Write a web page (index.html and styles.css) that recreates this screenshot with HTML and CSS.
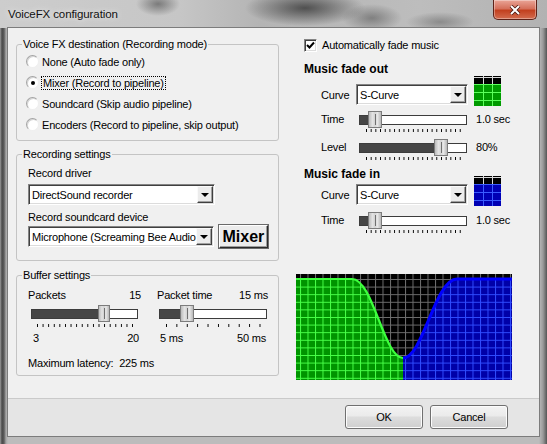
FILE: index.html
```html
<!DOCTYPE html>
<html lang="en">
<head>
    <meta charset="UTF-8">
    <title>VoiceFX configuration</title>
    <link rel="stylesheet" href="styles.css">
</head>
<body>
    <div class="window">
        <div class="titlebar">
            <span class="title">VoiceFX configuration</span>
            <button class="close">
                <svg width="12" height="10" viewBox="0 0 12 10">
                    <path d="M2 1L10 9M10 1L2 9" stroke="#4a1810" stroke-width="3.6" fill="none"/>
                    <path d="M2 1L10 9M10 1L2 9" stroke="#fff" stroke-width="2" fill="none"/>
                </svg>
            </button>
        </div>

        <div class="frame">
            <div class="client">
                <div class="main">
                    <!-- left column -->
                    <div class="col-left">
                        <fieldset class="group dest">
                            <legend>Voice FX destination (Recording mode)</legend>
                            <div class="option"><span class="radio"></span><span>None (Auto fade only)</span></div>
                            <div class="option"><span class="radio on"></span><span class="focus">Mixer (Record to pipeline)</span></div>
                            <div class="option"><span class="radio"></span><span>Soundcard (Skip audio pipeline)</span></div>
                            <div class="option"><span class="radio"></span><span>Encoders (Record to pipeline, skip output)</span></div>
                        </fieldset>

                        <fieldset class="group rec">
                            <legend>Recording settings</legend>
                            <div class="field-label">Record driver</div>
                            <div class="combo wide">
                                <span class="combo-text">DirectSound recorder</span>
                                <span class="arrow"></span>
                            </div>
                            <div class="field-label">Record soundcard device</div>
                            <div class="device-row">
                                <div class="combo wide">
                                    <span class="combo-text">Microphone (Screaming Bee Audio</span>
                                    <span class="arrow"></span>
                                </div>
                                <button class="mixer-btn">Mixer</button>
                            </div>
                        </fieldset>

                        <fieldset class="group buffer">
                            <legend>Buffer settings</legend>
                            <div class="sliders">
                                <div class="buf-col">
                                    <div class="slider-head"><span>Packets</span><span>15</span></div>
                                    <div class="slider packets" style="--v: 0.706">
                                        <div class="track"><div class="fill"></div></div>
                                        <div class="thumb"></div>
                                    </div>
                                    <div class="ticks packets-ticks"></div>
                                    <div class="scale"><span>3</span><span>20</span></div>
                                </div>
                                <div class="buf-col">
                                    <div class="slider-head"><span>Packet time</span><span>15 ms</span></div>
                                    <div class="slider ptime" style="--v: 0.222">
                                        <div class="track"><div class="fill"></div></div>
                                        <div class="thumb"></div>
                                    </div>
                                    <div class="ticks ptime-ticks"></div>
                                    <div class="scale"><span>5 ms</span><span>50 ms</span></div>
                                </div>
                            </div>
                            <div class="latency">Maximum latency:&nbsp; 225 ms</div>
                        </fieldset>
                    </div>

                    <!-- right column -->
                    <div class="col-right">
                        <label class="check-row">
                            <span class="checkbox">
                                <svg width="9" height="9" viewBox="0 0 9 9"><path d="M1 4L3.5 6.5L8 1.5" stroke="#000" stroke-width="2" fill="none"/></svg>
                            </span>
                            <span>Automatically fade music</span>
                        </label>

                        <div class="heading">Music fade out</div>
                        <div class="ctrl-row curve-row">
                            <span class="lbl">Curve</span>
                            <div class="combo short">
                                <span class="combo-text">S-Curve</span>
                                <span class="arrow"></span>
                            </div>
                            <svg class="preview" width="27" height="30" viewBox="0 0 27 30">
                                <rect width="27" height="30" fill="#000"/>
                                <rect y="8" width="27" height="22" fill="#009a00"/>
                                <path d="M0 1.5H27" stroke="#d8d8d8"/>
                                <path d="M9.5 0V8M18.5 0V8" stroke="#d8d8d8"/>
                                <path d="M9.5 8V30M18.5 8V30M0 8.5H27M0 16.5H27M0 24.5H27" stroke="#5cff5c"/>
                            </svg>
                        </div>
                        <div class="slider-row">
                            <span class="lbl">Time</span>
                            <div class="slider-wrap">
                                <div class="slider fine" style="--v: 0.1">
                                    <div class="track"><div class="fill"></div></div>
                                    <div class="thumb"></div>
                                </div>
                                <div class="ticks fine-ticks"></div>
                            </div>
                            <span class="val">1.0 sec</span>
                        </div>
                        <div class="slider-row">
                            <span class="lbl">Level</span>
                            <div class="slider-wrap">
                                <div class="slider fine" style="--v: 0.8">
                                    <div class="track"><div class="fill"></div></div>
                                    <div class="thumb"></div>
                                </div>
                                <div class="ticks fine-ticks"></div>
                            </div>
                            <span class="val">80%</span>
                        </div>

                        <div class="heading fade-in">Music fade in</div>
                        <div class="ctrl-row curve-row in">
                            <span class="lbl">Curve</span>
                            <div class="combo short">
                                <span class="combo-text">S-Curve</span>
                                <span class="arrow"></span>
                            </div>
                            <svg class="preview" width="27" height="30" viewBox="0 0 27 30">
                                <rect width="27" height="30" fill="#000"/>
                                <rect y="8" width="27" height="22" fill="#0000b4"/>
                                <path d="M0 1.5H27" stroke="#d8d8d8"/>
                                <path d="M9.5 0V8M18.5 0V8" stroke="#d8d8d8"/>
                                <path d="M9.5 8V30M18.5 8V30M0 8.5H27M0 16.5H27M0 24.5H27" stroke="#3a5cff"/>
                            </svg>
                        </div>
                        <div class="slider-row">
                            <span class="lbl">Time</span>
                            <div class="slider-wrap">
                                <div class="slider fine" style="--v: 0.1">
                                    <div class="track"><div class="fill"></div></div>
                                    <div class="thumb"></div>
                                </div>
                                <div class="ticks fine-ticks"></div>
                            </div>
                            <span class="val">1.0 sec</span>
                        </div>

                        <svg class="graph" width="216" height="106" viewBox="0 0 216 106">
                            <defs>
                                <pattern id="gridBlack" x="4" y="5" width="7.5" height="7.6" patternUnits="userSpaceOnUse">
                                    <rect width="7.5" height="7.6" fill="#000"/>
                                    <path d="M0.5 0V7.6M0 0.5H7.5" stroke="#6e6e6e" fill="none"/>
                                </pattern>
                                <pattern id="gridGreen" x="4" y="5" width="7.5" height="7.6" patternUnits="userSpaceOnUse">
                                    <rect width="7.5" height="7.6" fill="#009400"/>
                                    <path d="M0.5 0V7.6M0 0.5H7.5" stroke="#48ff48" fill="none"/>
                                </pattern>
                                <pattern id="gridBlue" x="4" y="5" width="7.5" height="7.6" patternUnits="userSpaceOnUse">
                                    <rect width="7.5" height="7.6" fill="#0000a8"/>
                                    <path d="M0.5 0V7.6M0 0.5H7.5" stroke="#2f4cff" fill="none"/>
                                </pattern>
                            </defs>
                            <rect width="216" height="106" fill="url(#gridBlack)"/>
                            <path d="M0 106V5H56C77 5 88 84 107 84V106Z" fill="url(#gridGreen)"/>
                            <path d="M107 106V84C127 84 139 5 161 5H216V106Z" fill="url(#gridBlue)"/>
                            <path d="M0 5H56C77 5 88 84 107 84" stroke="#3cff3c" stroke-width="2.2" fill="none"/>
                            <path d="M107 84C127 84 139 5 161 5H216" stroke="#0000ff" stroke-width="3" fill="none"/>
                        </svg>
                    </div>
                </div>

                <div class="footer">
                    <button class="btn">OK</button>
                    <button class="btn">Cancel</button>
                </div>
            </div>
        </div>
    </div>
</body>
</html>
```

FILE: styles.css
```css
* {
    margin: 0;
    padding: 0;
    box-sizing: border-box;
}

body {
    font-family: "Liberation Sans", Arial, sans-serif;
    font-size: 11px;
    letter-spacing: -0.2px;
    color: #000;
    background: #fff;
}

button {
    font-family: inherit;
    color: #000;
    cursor: default;
}

/* window chrome */

.window {
    width: 547px;
    height: 444px;
    display: flex;
    flex-direction: column;
    overflow: hidden;
}

.titlebar {
    height: 28px;
    display: flex;
    align-items: flex-start;
    padding: 0 10px 0 8px;
    background:
        radial-gradient(ellipse 22px 12px at 158px 4px, rgba(60, 60, 60, 0.55), transparent),
        radial-gradient(ellipse 60px 18px at 305px 8px, rgba(45, 45, 45, 0.75), transparent),
        radial-gradient(ellipse 30px 14px at 372px 18px, rgba(70, 70, 70, 0.5), transparent),
        radial-gradient(ellipse 34px 10px at 440px 22px, rgba(80, 80, 80, 0.45), transparent),
        linear-gradient(90deg, #cdcdcd 0, #c6c6c6 180px, #b4b4b4 260px, #bdbdbd 420px, #b2b2b2 547px);
}

.title {
    margin-top: 7px;
    font-size: 11.5px;
    line-height: 14px;
    letter-spacing: -0.1px;
    color: #111;
    text-shadow: 0 0 6px rgba(255, 255, 255, 0.9);
}

.close {
    margin-left: auto;
    width: 44px;
    height: 20px;
    display: flex;
    align-items: center;
    justify-content: center;
    border: 1px solid #5e2218;
    border-top: none;
    border-radius: 0 0 5px 5px;
    background: linear-gradient(#eaa597, #d5705b 45%, #c2401f 55%, #d36c4f);
    box-shadow: inset 0 0 0 1px rgba(255, 255, 255, 0.35);
}

.frame {
    flex: 1;
    display: flex;
    padding: 0 8px 8px 8px;
    background: linear-gradient(90deg, #9c9c9c 0, #4a4a4a 2px, #5c5c5c 4px, #a6a6a6 6px, #bcbcbc 8px, #bcbcbc 539px, #9a9a9a 543px, #555 547px);
}

.client {
    flex: 1;
    display: flex;
    flex-direction: column;
    background: #f0f0f0;
    box-shadow: 0 0 0 1px #7c7c7c;
}

.main {
    flex: 1;
    display: grid;
    grid-template-columns: 263px 216px;
    column-gap: 17px;
    padding: 10px 0 0 8px;
}

.footer {
    height: 38px;
    display: flex;
    justify-content: flex-end;
    gap: 7px;
    padding: 6px 31px 0 0;
    border-top: 1px solid #cacaca;
    background: #e5e5e5;
}

.btn {
    width: 78px;
    height: 24px;
    font-size: 11px;
    letter-spacing: -0.2px;
    border: 1px solid #707070;
    border-radius: 3px;
    background: linear-gradient(#f3f3f3, #ebebeb 45%, #dddddd 50%, #cfcfcf);
    box-shadow: inset 0 0 0 1px #fcfcfc;
}

/* group boxes */

.col-left {
    display: flex;
    flex-direction: column;
}

.group {
    min-width: 0;
    border: 1px solid #c4c4c4;
    border-radius: 3px;
    padding: 0 8px 5px 9px;
}

.group legend {
    margin-left: -4px;
    padding: 0 1px;
    line-height: 13px;
}

.option {
    height: 21px;
    display: flex;
    align-items: center;
    gap: 3px;
}

.radio {
    width: 13px;
    height: 13px;
    display: flex;
    align-items: center;
    justify-content: center;
    border-radius: 50%;
    background: #fff;
    border: 1px solid;
    border-color: #a4a4a4 #efefef #efefef #a4a4a4;
    box-shadow: inset 1px 1px 0 #d6d6d6;
}

.radio.on::after {
    content: "";
    width: 4px;
    height: 4px;
    border-radius: 50%;
    background: #000;
}

.focus {
    outline: 1px dotted #000;
    padding: 0 1px;
}

.group.rec {
    margin-top: 7px;
    padding: 0 10px 12px 11px;
}

.group.rec legend,
.group.buffer legend {
    margin-left: -6px;
}

.field-label {
    margin-top: 6px;
    line-height: 13px;
}

.combo {
    height: 21px;
    display: flex;
    align-items: center;
    background: #fff;
    border: 1px solid;
    border-color: #848484 #fff #fff #848484;
    box-shadow: inset 1px 1px 0 #404040, inset -1px -1px 0 #dcdcdc;
}

.rec .combo {
    margin-top: 4px;
}

.combo.wide {
    width: 187px;
}

.combo.short {
    width: 112px;
}

.combo-text {
    flex: 1;
    padding-left: 3px;
    white-space: nowrap;
    overflow: hidden;
}

.arrow {
    width: 16px;
    height: 17px;
    margin-right: 1px;
    display: flex;
    align-items: center;
    justify-content: center;
    background: #ececec;
    border: 1px solid;
    border-color: #fafafa #404040 #404040 #fafafa;
    box-shadow: inset -1px -1px 0 #a0a0a0;
}

.arrow::after {
    content: "";
    border-left: 4px solid transparent;
    border-right: 4px solid transparent;
    border-top: 4px solid #000;
}

.device-row {
    display: flex;
    align-items: center;
    gap: 5px;
    margin-top: 1px;
}

.device-row .combo {
    margin-top: 0;
}

.mixer-btn {
    width: 52px;
    height: 23px;
    font-size: 16px;
    font-weight: bold;
    letter-spacing: 0;
    background: #ececec;
    border: 1px solid;
    border-color: #fff #2a2a2a #2a2a2a #fff;
    box-shadow: inset -1px -1px 0 #9c9c9c, 0 0 0 1px #6a6a6a;
}

/* sliders */

.group.buffer {
    margin-top: 8px;
    padding: 0 10px 5px 11px;
}

.sliders {
    display: grid;
    grid-template-columns: 113px 111px;
    column-gap: 16px;
    margin-top: 7px;
}

.slider-head {
    display: flex;
    justify-content: space-between;
    line-height: 13px;
}

.slider {
    --tw: 14px;
    position: relative;
    height: 17px;
    display: flex;
    align-items: center;
}

.slider.packets {
    --tw: 12px;
    margin: 3px 3px 0;
}

.slider.ptime {
    margin: 3px 1px 0 2px;
}

.track {
    width: 100%;
    height: 10px;
    background: #fff;
    border: 1px solid #3c3c3c;
    overflow: hidden;
}

.fill {
    height: 100%;
    width: calc(var(--v) * 100%);
    background: #464646;
}

.thumb {
    position: absolute;
    top: 0;
    left: calc(var(--v) * (100% - var(--tw)));
    width: var(--tw);
    height: 17px;
    border: 1px solid #7c7c7c;
    background: linear-gradient(90deg, #bcbcbc, #e4e4e4 30%, #d2d2d2 50%, #e8e8e8 70%, #b8b8b8);
}

.thumb::after {
    content: "";
    position: absolute;
    top: 2px;
    bottom: 2px;
    left: 50%;
    width: 1px;
    background: #707070;
}

.ticks {
    height: 3px;
    background-image: linear-gradient(90deg, #000 1px, transparent 1px);
    background-repeat: repeat-x;
}

.packets-ticks {
    margin: 2px 0 0 9px;
    width: 96px;
    background-size: 5.6px 3px;
}

.ptime-ticks {
    margin: 2px 0 0 9px;
    width: 95px;
    background-size: 10.4px 3px;
}

.fine-ticks {
    margin: 1px 0 0 7px;
    width: 95px;
    background-size: 4.7px 3px;
}

.scale {
    display: flex;
    justify-content: space-between;
    margin-top: 5px;
    padding: 0 2px 0 5px;
    line-height: 13px;
}

.buf-col:last-child .scale {
    padding: 0 2px 0 3px;
}

.latency {
    margin-top: 12px;
    line-height: 13px;
}

/* right column */

.col-right {
    display: flex;
    flex-direction: column;
}

.check-row {
    height: 14px;
    display: flex;
    align-items: center;
    gap: 5px;
    padding-left: 8px;
}

.checkbox {
    width: 13px;
    height: 13px;
    display: flex;
    align-items: center;
    justify-content: center;
    background: #fff;
    border: 1px solid;
    border-color: #848484 #fff #fff #848484;
    box-shadow: inset 1px 1px 0 #404040, inset -1px -1px 0 #dcdcdc;
}

.heading {
    margin-top: 10px;
    padding-left: 8px;
    font-size: 12px;
    font-weight: bold;
    letter-spacing: 0;
    line-height: 14px;
}

.heading.fade-in {
    margin-top: 7px;
}

.ctrl-row {
    display: flex;
    align-items: center;
    padding-left: 25px;
}

.ctrl-row .lbl {
    width: 35px;
}

.curve-row {
    margin-top: 8px;
}

.curve-row.in {
    margin-top: 3px;
}

.preview {
    display: block;
    margin: -8px 0 -1px 6px;
}

.slider-row {
    display: flex;
    align-items: flex-start;
    padding-left: 25px;
    margin-top: 6px;
}

.slider-row + .slider-row {
    margin-top: 7px;
}

.curve-row.in + .slider-row {
    margin-top: 7px;
}

.slider-row .lbl {
    width: 38px;
    line-height: 17px;
}

.slider-wrap {
    width: 108px;
}

.val {
    margin-left: 9px;
    line-height: 17px;
}

.graph {
    display: block;
    margin-top: 41px;
}
```
